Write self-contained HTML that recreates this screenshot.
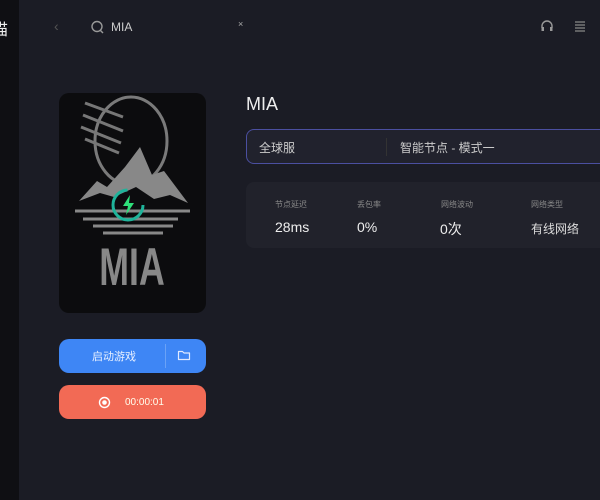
<!DOCTYPE html>
<html><head><meta charset="utf-8"><style>
*{margin:0;padding:0;box-sizing:border-box}
body{width:600px;height:500px;overflow:hidden;background:#1b1c25;font-family:"Liberation Sans","Noto Sans CJK SC",sans-serif;position:relative;color:#ddd}
.side{position:absolute;left:0;top:0;width:19px;height:500px;background:#0f0f13}
.a{position:absolute}
</style></head><body>
<div class="side"></div>
<div class="a" style="left:-8px;top:16px;font-size:16px;color:#eee">猫</div>
<div class="a" style="left:54px;top:18px;color:#555;font-size:14px">‹</div>
<svg class="a" style="left:90px;top:20px" width="14" height="14"><circle cx="7" cy="6.5" r="5" fill="none" stroke="#999" stroke-width="1.4"/><path d="M10 10l3 3" stroke="#999" stroke-width="1.4"/></svg>
<div class="a" style="left:111px;top:20px;font-size:12px;color:#ccc">MIA</div>
<div class="a" style="left:238px;top:19px;font-size:9px;color:#aaa">×</div>
<svg class="a" style="left:540px;top:19px" width="14" height="15"><path d="M2 9V7a5 5 0 0 1 10 0v2" fill="none" stroke="#999" stroke-width="1.4"/><rect x="1.5" y="8" width="2.5" height="4" fill="#999"/><rect x="10" y="8" width="2.5" height="4" fill="#999"/></svg>
<svg class="a" style="left:574px;top:20px" width="12" height="12"><path d="M1 2h10M1 5h10M1 8h10M1 11h10" stroke="#888" stroke-width="1.3"/></svg>
<div class="a" style="left:59px;top:93px;width:147px;height:220px;background:#0c0c0e;border-radius:10px;overflow:hidden">
<svg width="147" height="220">
<ellipse cx="72" cy="48" rx="36" ry="44" fill="none" stroke="#7a7a7a" stroke-width="3"/>
<path d="M26 10l38 14M24 22l40 16M22 34l40 16M26 46l34 14" stroke="#777" stroke-width="3"/>
<path d="M20 108l18-20 10 6 18-20 15-20 12 28 12-4 24 32-18-8-16 4-18-12-22 10-14-4z" fill="#888"/>
<path d="M16 118h115M24 126h95M34 133h80M44 140h60" stroke="#888" stroke-width="3"/>
<text x="0" y="0" transform="translate(73 192) scale(0.85 1.25)" text-anchor="middle" font-family="Liberation Sans" font-weight="bold" font-size="42" fill="#888">MIA</text>
<circle cx="69" cy="112" r="15" fill="none" stroke="#1fb39a" stroke-width="3" stroke-dasharray="70 30"/>
<path d="M71 102l-7 11h5l-2 9 8-12h-5z" fill="#2ee07a"/>
</svg></div>
<div class="a" style="left:59px;top:339px;width:147px;height:34px;background:#3e86f5;border-radius:10px"></div>
<div class="a" style="left:165px;top:344px;width:1px;height:24px;background:#6aa2f7"></div>
<div class="a" style="left:92px;top:348px;font-size:11px;color:#e8f0ff">启动游戏</div>
<svg class="a" style="left:177px;top:349px" width="14" height="12"><path d="M1.5 2.5h4l1.5 1.5h5.5v6.5h-11z" fill="none" stroke="#dfe9ff" stroke-width="1.2" stroke-linejoin="round"/></svg>
<div class="a" style="left:59px;top:385px;width:147px;height:34px;background:#f26a55;border-radius:10px"></div>
<svg class="a" style="left:98px;top:396px" width="13" height="13"><circle cx="6.5" cy="6.5" r="5" fill="none" stroke="#fff" stroke-width="1.4"/><circle cx="6.5" cy="6.5" r="2.3" fill="#fff"/></svg>
<div class="a" style="left:125px;top:397px;font-size:10px;color:#ffe">00:00:01</div>
<div class="a" style="left:246px;top:94px;font-size:18px;color:#eee">MIA</div>
<div class="a" style="left:246px;top:129px;width:370px;height:35px;border:1.5px solid #4b4fa0;border-radius:8px;background:#21222d"></div>
<div class="a" style="left:386px;top:138px;width:1px;height:18px;background:#333"></div>
<div class="a" style="left:259px;top:139px;font-size:12px;color:#ccc">全球服</div>
<div class="a" style="left:400px;top:139px;font-size:12px;color:#ccc">智能节点 - 模式一</div>
<div class="a" style="left:246px;top:182px;width:370px;height:66px;border-radius:8px;background:#21222b"></div>
<div class="a" style="left:275px;top:199px;font-size:8px;color:#888">节点延迟</div>
<div class="a" style="left:357px;top:199px;font-size:8px;color:#888">丢包率</div>
<div class="a" style="left:441px;top:199px;font-size:8px;color:#888">网络波动</div>
<div class="a" style="left:531px;top:199px;font-size:8px;color:#888">网络类型</div>
<div class="a" style="left:275px;top:219px;font-size:14px;color:#eee">28ms</div>
<div class="a" style="left:357px;top:219px;font-size:14px;color:#eee">0%</div>
<div class="a" style="left:440px;top:219px;font-size:14px;color:#eee">0次</div>
<div class="a" style="left:531px;top:220px;font-size:12px;color:#ddd">有线网络</div>
</body></html>
